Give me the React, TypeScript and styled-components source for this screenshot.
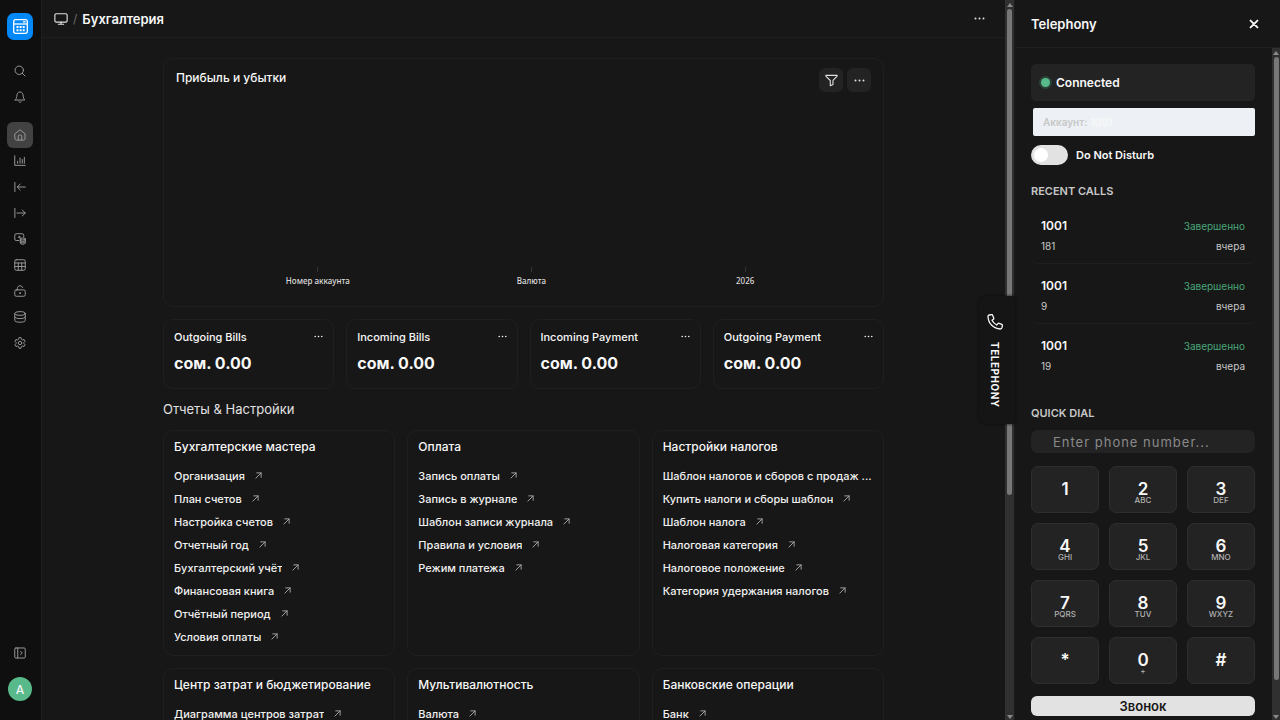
import React from "react";
import styled, { createGlobalStyle, css } from "styled-components";

const GlobalStyle = createGlobalStyle`
  *, *::before, *::after { box-sizing: border-box; }
  body { margin: 0; background: #171717; color: #f8f8f8; font-family: Inter, "Liberation Sans", sans-serif; font-size: 11px; }
  h1, h2, h3, p, ul { margin: 0; padding: 0; }
  ul { list-style: none; }
  button, input { font-family: inherit; }
  button { border: 0; padding: 0; background: none; color: inherit; cursor: pointer; }
  a { color: inherit; text-decoration: none; }
  svg { display: block; }
`;

const Shell = styled.div`
  display: flex;
  height: 100vh;
  overflow: hidden;
`;

/* ---------- sidebar ---------- */

const Sidebar = styled.nav`
  display: flex;
  flex-direction: column;
  align-items: center;
  flex: none;
  width: 42px;
  padding: 13px 1px 19px 0;
  background: #0f0f0f;
  border-right: 1px solid #1f1f1f;
`;

const Logo = styled.a`
  display: grid;
  place-items: center;
  width: 26px;
  height: 27px;
  border-radius: 7px;
  background: #0289f7;
`;

const NavGroup = styled.div<{ $gap: number }>`
  display: flex;
  flex-direction: column;
  margin-top: ${(p) => p.$gap}px;
`;

const NavButton = styled.button<{ $active?: boolean }>`
  display: grid;
  place-items: center;
  width: 26px;
  height: 26px;
  border-radius: 6px;
  color: #999;
  background: ${(p) => (p.$active ? "#424242" : "transparent")};
`;

const SidebarFoot = styled.div`
  display: flex;
  flex-direction: column;
  align-items: center;
  gap: 11px;
  margin-top: auto;
`;

const Avatar = styled.button`
  width: 24px;
  height: 24px;
  border-radius: 50%;
  background: #58b98a;
  color: #f3f3f3;
  font-size: 12px;
  font-weight: 500;
`;

/* ---------- main column ---------- */

const Main = styled.main`
  flex: 1;
  min-width: 0;
  overflow: hidden;
`;

const TopBar = styled.header`
  display: flex;
  align-items: center;
  height: 38px;
  padding: 0 20px 0 12px;
  border-bottom: 1px solid #1f1f1f;
  color: #e2e2e2;
`;

const Slash = styled.span`
  margin: 0 5px;
  font-size: 12px;
  color: #6b6b6b;
`;

const PageTitle = styled.h1`
  flex: 1;
  font-size: 13px;
  font-weight: 600;
  color: #f8f8f8;
`;

const Content = styled.div`
  max-width: 761px;
  margin: 0 auto;
  padding: 20px;
`;

const card = css`
  border: 1px solid #1f1f1f;
  border-radius: 10px;
`;

const ChartCard = styled.section`
  ${card}
  display: flex;
  flex-direction: column;
  height: 249px;
  padding: 9px 12px 20px;
`;

const ChartHead = styled.div`
  display: flex;
  gap: 4px;
`;

const ChartTitle = styled.h2`
  flex: 1;
  line-height: 19px;
  font-size: 12px;
  font-weight: 500;
`;

const SquareButton = styled.button`
  display: grid;
  place-items: center;
  width: 24px;
  height: 24px;
  border-radius: 6px;
  background: #232323;
  color: #e2e2e2;
`;

const Axis = styled.ul`
  display: grid;
  grid-template-columns: repeat(3, 1fr);
  margin: auto 19px 0 35px;
`;

const Tick = styled.li`
  display: flex;
  flex-direction: column;
  align-items: center;
  gap: 4px;
  font: 500 8px/10px "Noto Sans", sans-serif;
  color: #dcdcdc;

  &::before {
    content: "";
    width: 1px;
    height: 5px;
    background: #333;
  }
`;

const NumberGrid = styled.div`
  display: grid;
  grid-template-columns: repeat(4, 1fr);
  gap: 12px;
  margin-top: 12px;
`;

const NumberCard = styled.section`
  ${card}
  height: 70px;
  padding: 8px 10px;
`;

const NumberHead = styled.div`
  display: flex;
  align-items: center;
  justify-content: space-between;
  height: 17px;
`;

const NumberTitle = styled.h3`
  font-size: 11px;
  font-weight: 500;
`;

const Amount = styled.p`
  margin-top: 7px;
  line-height: 22px;
  font-size: 16px;
  font-weight: 700;
`;

const SectionTitle = styled.h2`
  margin: 10px 0;
  line-height: 21px;
  font-size: 13px;
  font-weight: 400;
  color: #e2e2e2;
`;

const LinkGrid = styled.div`
  display: grid;
  grid-template-columns: repeat(3, minmax(0, 1fr));
  gap: 12px;
`;

const LinkCard = styled.section`
  ${card}
  min-height: 226px;
  padding: 6px 10px 7px;
`;

const LinkTitle = styled.h3`
  margin-bottom: 7px;
  line-height: 20px;
  font-size: 12px;
  font-weight: 500;
`;

const ShortcutLink = styled.a`
  display: flex;
  align-items: center;
  gap: 10px;
  height: 23px;
  font-weight: 500;
  color: #f0f0f0;

  span {
    overflow: hidden;
    white-space: nowrap;
    text-overflow: ellipsis;
  }
  svg {
    flex: none;
    color: #b0b0b0;
  }
`;

/* ---------- scroll bars ---------- */

const ScrollTrack = styled.div<{ $width: number }>`
  display: flex;
  flex-direction: column;
  align-items: center;
  flex: none;
  width: ${(p) => p.$width}px;
  padding: 3px 0 1px;
  background: #303030;
  color: #8a8a8a;

  svg {
    flex: none;
  }
`;

const ScrollRail = styled.div`
  flex: 1;
  width: 5px;
  margin: 2px 0;
`;

const ScrollThumb = styled.div<{ $size: string }>`
  height: ${(p) => p.$size};
  border-radius: 3px;
  background: #777;
`;

/* ---------- telephony ---------- */

const PhoneDock = styled.aside`
  position: relative;
  display: flex;
  flex-direction: column;
  flex: none;
  width: 266px;
  border-left: 1px solid #1c1c1c;
  background: #171717;
`;

const DockTab = styled.button`
  position: absolute;
  top: 296px;
  right: 100%;
  display: flex;
  flex-direction: column;
  align-items: center;
  gap: 12px;
  width: 36px;
  height: 128px;
  padding: 18px 4px 0 0;
  border-radius: 8px 0 0 8px;
  background: #151515;
  box-shadow: 0 0 3px #0c0c0c;
  color: #f8f8f8;
`;

const DockTabText = styled.span`
  writing-mode: vertical-rl;
  font-size: 10px;
  font-weight: 700;
  letter-spacing: 0.5px;
`;

const DockHead = styled.header`
  display: flex;
  align-items: center;
  justify-content: space-between;
  flex: none;
  height: 48px;
  padding: 0 21px 0 16px;
  border-bottom: 1px solid #1f1f1f;
`;

const DockTitle = styled.h2`
  font-size: 13px;
  font-weight: 600;
`;

const DockScroll = styled.div`
  display: flex;
  flex: 1;
  min-height: 0;
`;

const DockBody = styled.div`
  flex: 1;
  min-width: 0;
  overflow: hidden;
  padding: 16px 17px 0 16px;
`;

const Status = styled.div`
  display: flex;
  align-items: center;
  gap: 6px;
  height: 37px;
  padding: 0 10px;
  border-radius: 5px;
  background: #232323;
  font-size: 12px;
  font-weight: 600;

  &::before {
    content: "";
    width: 9px;
    height: 9px;
    border-radius: 50%;
    background: #58b98a;
    box-shadow: 0 0 0 2px #2a4438;
  }
`;

const Account = styled.div`
  display: flex;
  align-items: center;
  gap: 3px;
  height: 28px;
  margin: 7px 0 9px 2px;
  padding: 0 10px;
  border-radius: 2px;
  background: #edf1f5;
  font-size: 10px;
  font-weight: 600;
  color: #c7c7c7;

  b {
    font-weight: 600;
    color: #f8f8f8;
  }
`;

const SwitchLabel = styled.label`
  display: flex;
  align-items: center;
  gap: 8px;
  margin-bottom: 18px;
  font-weight: 600;
`;

const Switch = styled.input`
  appearance: none;
  width: 37px;
  height: 20px;
  margin: 0;
  padding: 3px;
  border-radius: 10px;
  background: #e2e2e2;

  &::before {
    content: "";
    display: block;
    width: 14px;
    height: 14px;
    border-radius: 50%;
    background: #fff;
  }
  &:checked::before {
    margin-left: auto;
  }
`;

const DockHeading = styled.h3`
  line-height: 16px;
  font-size: 11px;
  font-weight: 600;
  color: #c7c7c7;
`;

const CallList = styled.ul`
  margin: 5px 0 21px;
`;

const Call = styled.li`
  display: grid;
  grid-template-columns: 1fr auto;
  align-content: center;
  row-gap: 4px;
  height: 60px;
  padding: 4px 10px 0;
  border-bottom: 1px solid #1e1e1e;
  border-radius: 6px;
  line-height: 16px;
  font-size: 10px;
  color: #c7c7c7;

  &:last-child {
    border-bottom-color: transparent;
  }
`;

const Caller = styled.span`
  font-size: 12px;
  font-weight: 600;
  color: #f8f8f8;
`;

const Outcome = styled.span`
  color: #48a678;
`;

const CallMeta = styled.span<{ $end?: boolean }>`
  text-align: ${(p) => (p.$end ? "right" : "left")};
`;

const NumberInput = styled.input`
  display: block;
  width: 100%;
  height: 23px;
  margin: 9px 0 13px;
  padding: 0 22px;
  border: 0;
  border-radius: 7px;
  background: #232323;
  color: #f8f8f8;
  font-size: 13px;
  letter-spacing: 1px;

  &::placeholder {
    color: #8a8a8a;
  }
`;

const Keypad = styled.div`
  display: grid;
  grid-template-columns: repeat(3, 1fr);
  gap: 10px;
`;

const Key = styled.button`
  display: flex;
  flex-direction: column;
  align-items: center;
  justify-content: flex-start;
  height: 47px;
  padding-top: 14px;
  border: 1px solid #2e2e2e;
  border-radius: 7px;
  background: #232323;
  line-height: 16px;
  font-size: 17px;
  font-weight: 600;

  small {
    line-height: 6px;
    font-size: 8px;
    font-weight: 500;
    color: #b0b0b0;
  }
`;

const CallButton = styled.button`
  width: 100%;
  height: 20px;
  margin-top: 12px;
  border-radius: 6px;
  background: #e2e2e2;
  color: #171717;
  font-size: 13px;
  line-height: 18px;
  font-weight: 600;
`;

/* ---------- icons ---------- */

function Icon({ size = 12, width = 1.3, children }: { size?: number; width?: number; children: React.ReactNode }) {
  return (
    <svg width={size} height={size} viewBox="0 0 16 16" fill="none" stroke="currentColor" strokeWidth={width} strokeLinecap="round" strokeLinejoin="round" aria-hidden="true">
      {children}
    </svg>
  );
}

const icons = {
  search: <><circle cx="7" cy="7" r="5.6" /><path d="M11.2 11.2 14.6 14.6" /></>,
  bell: <path d="M1.6 12h12.8c-1.3-1.2-1.8-2.5-2-4.5C12 3.500 11 1.300 8 1.300S4 3.500 3.600 7.500c-.2 2-.7 3.300-2 4.500ZM6.500 14.500c.8.700 2.200.700 3 0" />,
  home: <><path d="M1.300 6.400 8 1l6.700 5.400v6.600a1.800 1.800 0 0 1-1.800 1.800H3.100A1.800 1.800 0 0 1 1.300 13Z" /><path d="M5.700 14.800V9.500c0-.8.500-1.300 1.300-1.300h2c.8 0 1.300.5 1.300 1.300v5.300" /></>,
  chart: <path d="M1 1v12.800h14M4.800 11V8.300M8 11V4M11 11V6M13.800 11V3" />,
  inbound: <path d="M1.200 2v12M15 8H4.500M8.300 4 4.300 8l4 4" />,
  outbound: <path d="M1.200 2v12M4 8h11M11 4l4 4-4 4" />,
  money: <><path d="M6.500 10H3a2 2 0 0 1-2-2V3a2 2 0 0 1 2-2h8a2 2 0 0 1 2 2v2.500" /><circle cx="7" cy="5.500" r="1" /><ellipse cx="11.700" cy="8" rx="3.300" ry="1.300" /><path d="M8.400 8v5.500c0 2 6.600 2 6.600 0V8M8.400 10c0 1.800 6.600 1.800 6.600 0M8.400 12c0 1.800 6.600 1.800 6.600 0" /></>,
  table: <><rect x="1" y="1" width="14" height="14" rx="2" /><path d="M1 5.300h14M1 10h14M5.700 5.300V15M10.300 5.300V15" /></>,
  lock: <><rect x="1" y="6.500" width="14" height="8.500" rx="2" /><path d="M4.500 6.500V4.600C4.500 2.500 6 1 8 1c1.700 0 3 .9 3.400 2.400" /><circle cx="8" cy="10.800" r=".6" fill="currentColor" /></>,
  database: <><ellipse cx="8" cy="3.300" rx="7" ry="2.500" /><path d="M1 3.300v9.400c0 3 14 3 14 0V3.300M1 8c0 3 14 3 14 0" /></>,
  gear: <><path d="m6.700 1-.5 2.100-1.600.9-2-.7-1.400 2.400L2.700 7.200v1.600l-1.500 1.500 1.400 2.400 2-.7 1.600.9.500 2.100h2.600l.5-2.100 1.600-.9 2 .7 1.400-2.400-1.500-1.500V7.200l1.500-1.500-1.400-2.400-2 .7-1.600-.9L9.300 1Z" /><circle cx="8" cy="8" r="2.300" /></>,
  expand: <><rect x="1" y="1.300" width="14" height="13.400" rx="1.500" /><path d="M5 1.300v13.400M8.700 5.700 11 8l-2.300 2.300" /></>,
  monitor: <><rect x="1" y="2" width="14" height="9.500" rx="1.500" /><path d="M8 11.500V14M5 14h6" /></>,
  filter: <path d="M1 1.700h14l-.3 1.200-4.900 5v5L6.500 14.500V8L1.300 2.900Z" />,
  arrow: <path d="M2 14 14 2M4 2h10v10" />,
  phone: <path d="M2.300 1 4.400.6c.5-.1 1 .2 1.200.6l1.100 2.700c.2.500.1 1-.3 1.300L5 6.300A11 11 0 0 0 9.700 11l1.100-1.400c.3-.4.800-.5 1.300-.3l2.700 1.100c.4.200.7.700.6 1.200L15 13.700c-.2.800-.9 1.300-1.700 1.300C6.500 14.600 1.400 9.500 1 2.700 1 1.900 1.500 1.200 2.300 1Z" />,
  close: <path d="m2.500 2.500 11 11M13.500 2.500l-11 11" />,
};

const Dots = ({ size = 11 }: { size?: number }) => (
  <svg width={size} height="3" viewBox="0 0 11 3" fill="currentColor" aria-hidden="true">
    <circle cx="1.500" cy="1.500" r="1" />
    <circle cx="5.500" cy="1.500" r="1" />
    <circle cx="9.500" cy="1.500" r="1" />
  </svg>
);

const LogoMark = () => (
  <svg width="17" height="17" viewBox="0 0 17 17" fill="none" stroke="#fff" strokeWidth="1.300" aria-hidden="true">
    <rect x="1.700" y="1.700" width="13.600" height="13.600" rx="2" />
    <path d="M1.700 6h13.600" />
    <path d="M11 3.800h2.500" strokeWidth="1.400" />
    <path d="M4.500 9h2M7.600 9h2M10.700 9h2M4.500 12.200h2M7.600 12.200h2M10.700 12.200h2" strokeWidth="2" />
  </svg>
);

function ScrollBar({ width, size }: { width: number; size: string }) {
  return (
    <ScrollTrack $width={width} aria-hidden="true">
      <svg width="6" height="4" viewBox="0 0 6 4"><path d="M0 4 3 0l3 4Z" fill="currentColor" /></svg>
      <ScrollRail><ScrollThumb $size={size} /></ScrollRail>
      <svg width="6" height="4" viewBox="0 0 6 4"><path d="M0 0h6L3 4Z" fill="currentColor" /></svg>
    </ScrollTrack>
  );
}

/* ---------- data ---------- */

const navItems: { icon: keyof typeof icons; label: string }[] = [
  { icon: "home", label: "Главная" },
  { icon: "chart", label: "Отчеты" },
  { icon: "inbound", label: "Входящие" },
  { icon: "outbound", label: "Исходящие" },
  { icon: "money", label: "Платежи" },
  { icon: "table", label: "Таблица" },
  { icon: "lock", label: "Доступ" },
  { icon: "database", label: "Данные" },
  { icon: "gear", label: "Настройки" },
];

const totals = ["Outgoing Bills", "Incoming Bills", "Incoming Payment", "Outgoing Payment"];

const linkCards = [
  { title: "Бухгалтерские мастера", links: ["Организация", "План счетов", "Настройка счетов", "Отчетный год", "Бухгалтерский учёт", "Финансовая книга", "Отчётный период", "Условия оплаты"] },
  { title: "Оплата", links: ["Запись оплаты", "Запись в журнале", "Шаблон записи журнала", "Правила и условия", "Режим платежа"] },
  { title: "Настройки налогов", links: ["Шаблон налогов и сборов с продаж ...", "Купить налоги и сборы шаблон", "Шаблон налога", "Налоговая категория", "Налоговое положение", "Категория удержания налогов"] },
  { title: "Центр затрат и бюджетирование", links: ["Диаграмма центров затрат"] },
  { title: "Мультивалютность", links: ["Валюта"] },
  { title: "Банковские операции", links: ["Банк"] },
];

const calls = [
  { from: "1001", seconds: "181" },
  { from: "1001", seconds: "9" },
  { from: "1001", seconds: "19" },
];

const keys = [
  ["1", ""], ["2", "ABC"], ["3", "DEF"],
  ["4", "GHI"], ["5", "JKL"], ["6", "MNO"],
  ["7", "PQRS"], ["8", "TUV"], ["9", "WXYZ"],
  ["*", ""], ["0", "+"], ["#", ""],
];

export default function App() {
  return (
    <>
      <GlobalStyle />
      <Shell>
        <Sidebar>
          <Logo href="#" aria-label="Бухгалтерия"><LogoMark /></Logo>
          <NavGroup $gap={18}>
            <NavButton aria-label="Поиск"><Icon>{icons.search}</Icon></NavButton>
            <NavButton aria-label="Уведомления"><Icon>{icons.bell}</Icon></NavButton>
          </NavGroup>
          <NavGroup $gap={12}>
            {navItems.map((item, i) => (
              <NavButton key={item.icon} $active={i === 0} aria-label={item.label}>
                <Icon>{icons[item.icon]}</Icon>
              </NavButton>
            ))}
          </NavGroup>
          <SidebarFoot>
            <NavButton aria-label="Развернуть"><Icon>{icons.expand}</Icon></NavButton>
            <Avatar>A</Avatar>
          </SidebarFoot>
        </Sidebar>

        <Main>
          <TopBar>
            <Icon size={14}>{icons.monitor}</Icon>
            <Slash>/</Slash>
            <PageTitle>Бухгалтерия</PageTitle>
            <button aria-label="Меню"><Dots /></button>
          </TopBar>
          <Content>
            <ChartCard>
              <ChartHead>
                <ChartTitle>Прибыль и убытки</ChartTitle>
                <SquareButton aria-label="Фильтр"><Icon size={13}>{icons.filter}</Icon></SquareButton>
                <SquareButton aria-label="Ещё"><Dots /></SquareButton>
              </ChartHead>
              <Axis>
                <Tick>Номер аккаунта</Tick>
                <Tick>Валюта</Tick>
                <Tick>2026</Tick>
              </Axis>
            </ChartCard>
            <NumberGrid>
              {totals.map((title) => (
                <NumberCard key={title}>
                  <NumberHead>
                    <NumberTitle>{title}</NumberTitle>
                    <button aria-label="Ещё"><Dots size={9} /></button>
                  </NumberHead>
                  <Amount>сом. 0.00</Amount>
                </NumberCard>
              ))}
            </NumberGrid>
            <SectionTitle>Отчеты &amp; Настройки</SectionTitle>
            <LinkGrid>
              {linkCards.map((group) => (
                <LinkCard key={group.title}>
                  <LinkTitle>{group.title}</LinkTitle>
                  {group.links.map((text) => (
                    <ShortcutLink key={text} href="#">
                      <span>{text}</span>
                      {!text.endsWith("...") && <Icon size={7} width={2}>{icons.arrow}</Icon>}
                    </ShortcutLink>
                  ))}
                </LinkCard>
              ))}
            </LinkGrid>
          </Content>
        </Main>
        <ScrollBar width={9} size="69%" />

        <PhoneDock>
          <DockTab>
            <Icon size={16}>{icons.phone}</Icon>
            <DockTabText>TELEPHONY</DockTabText>
          </DockTab>
          <DockHead>
            <DockTitle>Telephony</DockTitle>
            <button aria-label="Close"><Icon size={10} width={3}>{icons.close}</Icon></button>
          </DockHead>
          <DockScroll>
            <DockBody>
              <Status>Connected</Status>
              <Account>Аккаунт: <b>1001</b></Account>
              <SwitchLabel><Switch type="checkbox" />Do Not Disturb</SwitchLabel>
              <DockHeading>RECENT CALLS</DockHeading>
              <CallList>
                {calls.map((call) => (
                  <Call key={call.seconds}>
                    <Caller>{call.from}</Caller>
                    <Outcome>Завершенно</Outcome>
                    <CallMeta>{call.seconds}</CallMeta>
                    <CallMeta $end>вчера</CallMeta>
                  </Call>
                ))}
              </CallList>
              <DockHeading>QUICK DIAL</DockHeading>
              <NumberInput type="tel" aria-label="Phone number" placeholder="Enter phone number..." />
              <Keypad>
                {keys.map(([digit, letters]) => (
                  <Key key={digit}>
                    {digit}
                    {letters && <small>{letters}</small>}
                  </Key>
                ))}
              </Keypad>
              <CallButton>Звонок</CallButton>
            </DockBody>
            <ScrollBar width={8} size="95%" />
          </DockScroll>
        </PhoneDock>
      </Shell>
    </>
  );
}
